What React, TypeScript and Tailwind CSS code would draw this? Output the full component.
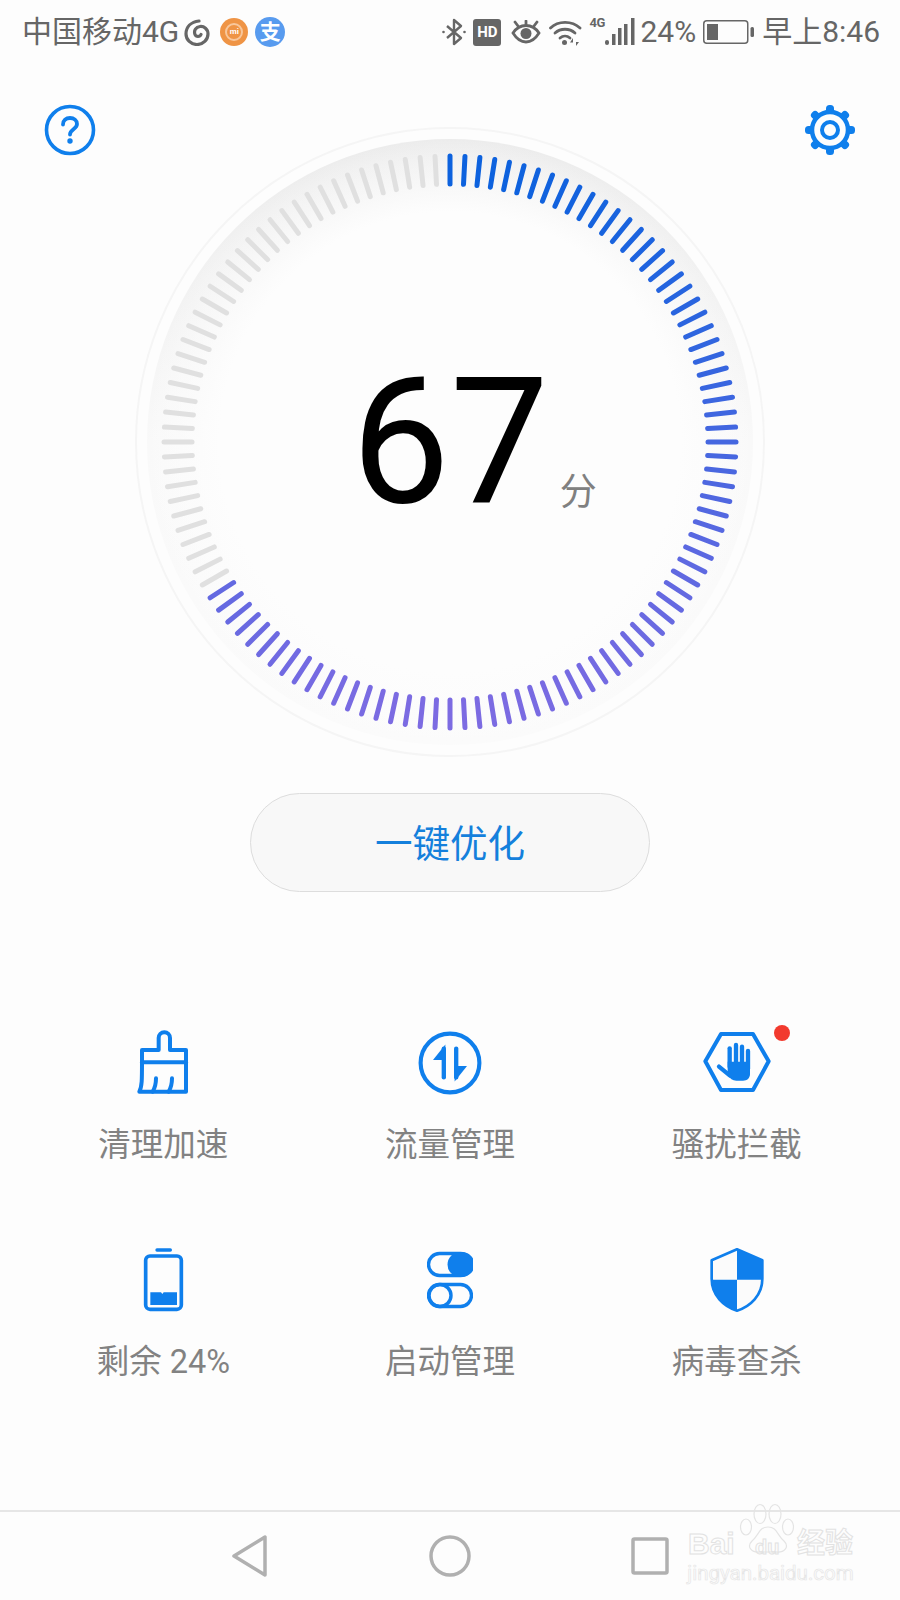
const BLUE = "#0f7fec";
const GREY = "#666666";

function mix(a: number[], b: number[], t: number) {
  return `rgb(${a.map((v, i) => Math.round(v + (b[i] - v) * t)).join(",")})`;
}

function Gauge() {
  const ticks = Array.from({ length: 120 }, (_, i) => i);
  return (
    <svg width="640" height="640" viewBox="-320 -320 640 640">
      <defs>
        <linearGradient id="band" x1="0" y1="0" x2="0" y2="1">
          <stop offset="0" stopColor="#ececec" />
          <stop offset="0.5" stopColor="#f9f9f9" />
          <stop offset="1" stopColor="#fbfbfb" />
        </linearGradient>
        <radialGradient id="fade" cx="0.5" cy="0.5" r="0.5">
          <stop offset="0.76" stopColor="#fdfdfd" stopOpacity="1" />
          <stop offset="0.94" stopColor="#fdfdfd" stopOpacity="0.3" />
          <stop offset="1" stopColor="#fdfdfd" stopOpacity="0" />
        </radialGradient>
      </defs>
      <circle r="314" fill="#fdfdfd" stroke="#f5f5f5" strokeWidth="2" />
      <circle r="303" fill="url(#band)" />
      <circle r="303" fill="url(#fade)" />
      {ticks.map((i) => {
        const a = (i * 3 * Math.PI) / 180;
        const s = Math.sin(a);
        const c = -Math.cos(a);
        const t = (c + 1) / 2;
        const color = i < 80 ? mix([13, 98, 222], [124, 107, 226], t) : "#e0e0e0";
        return (
          <line
            key={i}
            x1={s * 258}
            y1={c * 258}
            x2={s * 286}
            y2={c * 286}
            stroke={color}
            strokeWidth="5"
            strokeLinecap="round"
          />
        );
      })}
    </svg>
  );
}

function HelpIcon() {
  return (
    <svg width="52" height="52" viewBox="0 0 52 52" fill="none">
      <circle cx="26" cy="26" r="23.5" stroke={BLUE} strokeWidth="3.6" />
      <path d="M19 20.5c0-4 3-6.500 7-6.500s7 2.500 7 6c0 5-7 5.500-7 10.500" stroke={BLUE} strokeWidth="3.800" strokeLinecap="round" />
      <circle cx="26" cy="37" r="2.700" fill={BLUE} />
    </svg>
  );
}

function GearIcon() {
  const teeth = [0, 45, 90, 135, 180, 225, 270, 315];
  return (
    <svg width="52" height="52" viewBox="-26 -26 52 52" fill="none">
      {teeth.map((d) => (
        <rect key={d} x="-4" y="-25" width="8" height="9" rx="3.500" fill={BLUE} transform={`rotate(${d})`} />
      ))}
      <circle r="18" stroke={BLUE} strokeWidth="4.500" />
      <circle r="8" stroke={BLUE} strokeWidth="4" />
    </svg>
  );
}

function Brush() {
  return (
    <svg width="55" height="66" viewBox="200 90 165 198" fill="none" stroke={BLUE} strokeWidth="12" strokeLinejoin="round" strokeLinecap="round">
      <path d="M268 150V114a17 17 0 0 1 34 0V150H350V275H210C218 260 218 240 218 185V150Z" />
      <path d="M218 187H350" />
      <path d="M260 235C260 250 256 265 250 275" />
      <path d="M308 235C308 250 304 265 298 275" />
    </svg>
  );
}

function Flow() {
  return (
    <svg width="66" height="66" viewBox="0 0 64 64" fill="none">
      <circle cx="32" cy="32" r="28.500" stroke={BLUE} strokeWidth="4" />
      <path d="M26 18V46" stroke={BLUE} strokeWidth="4.200" strokeLinecap="round" />
      <path d="M27.500 14L15.500 29H27.500Z" fill={BLUE} />
      <path d="M38 18V46" stroke={BLUE} strokeWidth="4.200" strokeLinecap="round" />
      <path d="M36.500 50L48.500 35H36.500Z" fill={BLUE} />
    </svg>
  );
}

function Hex() {
  return (
    <svg width="70" height="66" viewBox="185 90 210 198" fill="none">
      <path d="M195 184L242 102H338L385 184L338 270H242Z" stroke={BLUE} strokeWidth="12" strokeLinejoin="round" />
      <g stroke={BLUE} strokeWidth="13" strokeLinecap="round">
        <path d="M268 145V200" />
        <path d="M287 135V200" />
        <path d="M305 140V200" />
        <path d="M323 153V205" />
        <path d="M236 200L268 226" strokeWidth="13" />
      </g>
      <path d="M262 185H329V222C329 235 320 242 308 242H288C276 242 270 236 262 226Z" fill={BLUE} />
    </svg>
  );
}

function Battery() {
  return (
    <svg width="42" height="66" viewBox="215 52 126 198" fill="none">
      <rect x="255" y="56" width="50" height="10" rx="5" fill={BLUE} />
      <rect x="226" y="79" width="107" height="160" rx="13" stroke={BLUE} strokeWidth="11" />
      <path d="M240 188H272L276 193L280 188H320V226H240Z" fill={BLUE} />
    </svg>
  );
}

function Toggles() {
  return (
    <svg width="46" height="58" viewBox="0 0 46 58" fill="none">
      <rect x="1.500" y="2.500" width="43" height="22" rx="11" stroke={BLUE} strokeWidth="3.400" />
      <path d="M33 1H35A12.500 12.500 0 0 1 35 26H33A12.500 12.500 0 0 1 33 1Z" fill={BLUE} />
      <rect x="1.500" y="33.500" width="43" height="22" rx="11" stroke={BLUE} strokeWidth="3.400" />
      <circle cx="13" cy="44.500" r="11" stroke={BLUE} strokeWidth="3.400" />
    </svg>
  );
}

function Shield() {
  return (
    <svg width="56" height="66" viewBox="206 50 168 198" fill="none">
      <path d="M290 57L366 90V145C366 195 330 228 290 241C250 228 214 195 214 145V90Z" fill="#fbfbfb" stroke={BLUE} strokeWidth="8" strokeLinejoin="round" />
      <path d="M290 57L366 90V148H290Z" fill={BLUE} />
      <path d="M214 148H290V241C250 228 214 195 214 148Z" fill={BLUE} />
    </svg>
  );
}

function Cell({ icon, label, dot }: { icon: React.ReactNode; label: string; dot?: boolean }) {
  return (
    <div className="flex flex-col items-center">
      <div className="relative flex h-[66px] items-center justify-center">
        {icon}
        {dot && <span className="absolute top-[-5px] right-[-18px] h-4 w-4 rounded-full bg-[#f23a2e]" />}
      </div>
      <div className="mt-[29px] text-[32.500px] leading-[40px] whitespace-pre text-[#828282]">{label}</div>
    </div>
  );
}

function StatusLeft() {
  return (
    <div className="flex items-center">
      <span className="text-[30px] leading-[40px] text-[#666666]">中国移动4G</span>
      <svg className="ml-[5px]" width="26" height="28" viewBox="0 0 26 28" fill="none" stroke={GREY} strokeWidth="3.200" strokeLinecap="round">
        <path d="M15 3C7 4 2 9 2 16a11 10.500 0 0 0 22 0c0-5-4-8-8-7.500-4 .5-6.500 4-5 8 1 2.500 5 2.500 6 0" />
      </svg>
      <span className="relative ml-[10px] flex h-[28px] w-[28px] items-center justify-center rounded-full bg-[#ef9445]">
        <span className="flex h-[18px] w-[18px] items-center justify-center rounded-full border-2 border-[#f8c79c] bg-[#ef9445] text-[8px] leading-none font-bold text-white">mi</span>
      </span>
      <span className="ml-[7px] flex h-[30px] w-[30px] items-center justify-center rounded-full bg-[#589bef] text-[21px] leading-none font-bold text-white">支</span>
    </div>
  );
}

function StatusRight() {
  return (
    <div className="flex items-center">
      <svg width="24" height="28" viewBox="0 0 24 28" fill="none" stroke={GREY} strokeWidth="2.400" strokeLinejoin="round">
        <path d="M5 8L19 20L12 26V2L19 8L5 20" />
        <circle cx="1.500" cy="14" r="1.300" fill={GREY} stroke="none" />
        <circle cx="22.500" cy="14" r="1.300" fill={GREY} stroke="none" />
      </svg>
      <span className="ml-[7px] flex h-[27px] w-[28px] items-center justify-center rounded-[3px] bg-[#666666] text-[15px] leading-none font-bold text-white">HD</span>
      <svg className="ml-[10px]" width="30" height="24" viewBox="0 0 30 24" fill="none" stroke={GREY} strokeWidth="2.800" strokeLinecap="round">
        <path d="M2 13C6 7 10 5.500 15 5.500S24 7 28 13C24 19.500 20 22 15 22S6 19.500 2 13Z" />
        <circle cx="15" cy="13.500" r="5.500" fill={GREY} stroke="none" />
        <path d="M4 2L7 6M26 2L23 6M15 1V4" />
      </svg>
      <svg className="ml-[8px]" width="33" height="27" viewBox="0 0 33 27" fill="none" stroke={GREY} strokeWidth="2.800" strokeLinecap="round">
        <path d="M1.500 9C9 1.500 23 1.500 31 9" />
        <path d="M6 14C11.500 9 20.500 9 26 14" />
        <path d="M11 19C14 16.500 18 16.500 21 19" />
        <circle cx="15.500" cy="23.500" r="2.500" fill={GREY} stroke="none" />
        <path d="M24 19L21 23.500H24ZM27 27L30 23H27Z" fill={GREY} stroke="none" />
      </svg>
      <div className="relative ml-[7px] h-[28px] w-[46px]">
        <span className="absolute top-[-3px] left-0 text-[13px] leading-[16px] font-bold tracking-[-0.500px] text-[#666666]">4G</span>
        <svg className="absolute top-0 left-0" width="46" height="28" viewBox="0 0 46 28" fill={GREY}>
          <rect x="16" y="22" width="4" height="5" rx="2" />
          <rect x="23" y="16" width="3.500" height="11" />
          <rect x="29" y="10" width="3.500" height="17" />
          <rect x="35" y="6" width="3.500" height="21" />
          <rect x="42" y="0" width="3.500" height="27" />
        </svg>
      </div>
      <span className="ml-[5px] text-[30px] leading-[40px] text-[#666666]">24%</span>
      <svg className="ml-[7px]" width="51" height="24" viewBox="0 0 51 24" fill="none">
        <rect x="0.750" y="0.750" width="44" height="22.500" rx="3" stroke={GREY} strokeWidth="1.500" />
        <rect x="4" y="4" width="11" height="16" fill={GREY} />
        <rect x="47.500" y="7" width="3.500" height="10" rx="1.500" fill={GREY} />
      </svg>
      <span className="ml-[8px] text-[30px] leading-[40px] text-[#666666]">早上8:46</span>
    </div>
  );
}

export default function App() {
  return (
    <div className="relative flex h-[1600px] w-[900px] flex-col overflow-hidden bg-[#fdfdfd] font-['Roboto','Noto_Sans_CJK_SC',sans-serif]">
      <div className="flex h-[64px] items-center justify-between pr-[20px] pl-[22px]">
        <StatusLeft />
        <StatusRight />
      </div>

      <section className="relative mt-[58px] flex h-[640px] justify-center">
        <Gauge />
        <div className="absolute top-[-18px] right-[44px] left-[44px] flex justify-between">
          <HelpIcon />
          <GearIcon />
        </div>
        <div className="absolute top-[210px] left-[351px] flex items-start">
          <span className="text-[176px] leading-[220px] font-normal text-black">67</span>
          <span className="mt-[136px] ml-[11px] text-[37px] leading-[50px] text-[#808080]">分</span>
        </div>
      </section>

      <button className="mx-auto mt-[31px] flex h-[99px] w-[400px] items-center justify-center rounded-full border-[1.500px] border-[#dddddd] bg-[#f8f8f8] pt-[4px] text-[37.500px] text-[#1480dc]">
        一键优化
      </button>

      <div className="mt-[138px] grid grid-cols-3 gap-y-[82px] px-[20px]">
        <Cell icon={<Brush />} label="清理加速" />
        <Cell icon={<Flow />} label="流量管理" />
        <Cell icon={<Hex />} label="骚扰拦截" dot />
        <Cell icon={<Battery />} label="剩余 24%" />
        <Cell icon={<Toggles />} label="启动管理" />
        <Cell icon={<Shield />} label="病毒查杀" />
      </div>

      <nav className="mt-auto flex h-[90px] items-center justify-center gap-[160px] border-t-2 border-[#e6e6e6]">
        <svg width="38" height="44" viewBox="0 0 38 44" fill="none" stroke="#b0b0b0" strokeWidth="3.500" strokeLinejoin="round">
          <path d="M34 3V41L3 22Z" />
        </svg>
        <svg width="42" height="44" viewBox="0 0 42 44" fill="none" stroke="#b0b0b0" strokeWidth="3.500">
          <circle cx="21" cy="22" r="19" />
        </svg>
        <svg width="38" height="38" viewBox="0 0 38 38" fill="none" stroke="#b0b0b0" strokeWidth="3.500" strokeLinejoin="round">
          <rect x="2" y="2" width="34" height="34" rx="1.500" />
        </svg>
      </nav>

      <div className="absolute top-[1503px] left-[688px] flex h-[80px] w-[165px] flex-col items-center">
        <svg className="absolute top-0 left-[50px]" width="60" height="50" viewBox="0 0 60 50" fill="none" stroke="#e4e4e4" strokeWidth="1.200">
          <ellipse cx="8" cy="24" rx="5.500" ry="8" />
          <ellipse cx="22" cy="11" rx="6" ry="9.500" />
          <ellipse cx="37" cy="11" rx="6" ry="9.500" />
          <ellipse cx="50" cy="24" rx="5.500" ry="8" />
          <path d="M30 24C21 24 21 32 14 38C8 44 14 50 22 49H38C46 50 52 44 46 38C39 32 39 24 30 24Z" />
        </svg>
        <div className="relative mt-[26px] flex h-[30px] w-full items-center justify-between text-[30px] leading-none font-bold text-transparent [-webkit-text-stroke:1px_#e2e2e2]">
          <span className="font-['Liberation_Sans',sans-serif]">Bai</span>
          <span className="absolute left-[67px] top-[8px] text-[20px] font-['Liberation_Sans',sans-serif]">du</span>
          <span className="text-[28px]">经验</span>
        </div>
        <div className="mt-[2px] text-[20.500px] leading-[24px] text-transparent [-webkit-text-stroke:0.700px_#e6e6e6]">jingyan.baidu.com</div>
      </div>
    </div>
  );
}
